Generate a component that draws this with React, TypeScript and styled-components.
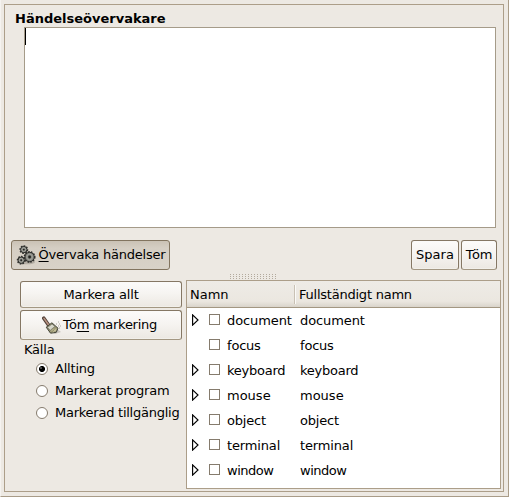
import React from "react";
import styled, { createGlobalStyle, css } from "styled-components";

const GlobalStyle = createGlobalStyle`
  * { box-sizing: border-box; }
  html, body { margin: 0; padding: 0; overflow: hidden; }
  body {
    background: #ede9e3;
    color: #000;
    font: 13px/16px "DejaVu Sans", sans-serif;
  }
`;

const Window = styled.div`
  width: 509px;
  height: 497px;
  padding: 4px 4px 4px 3px;
  background: #ede9e3;
  border-left: 1px solid #f5f3f0;
  border-right: 1px solid #a99c88;
  border-bottom: 1px solid #a99c88;
`;

const Page = styled.main`
  width: 500px;
  height: 488px;
  border: 1px solid #ac9e89;
  padding: 5px 2px 2px 6px;
  display: flex;
  flex-direction: column;
`;

const Title = styled.h1`
  margin: 0 0 0 4px;
  height: 17px;
  font-size: 13px;
  line-height: 18px;
  font-weight: bold;
  white-space: nowrap;
`;

const LogView = styled.div`
  width: 472px;
  height: 201px;
  margin-left: 13px;
  background: #fff;
  border: 1px solid #a59b89;
`;

const Caret = styled.div`
  width: 1px;
  height: 17px;
  background: #000;
`;

const Toolbar = styled.div`
  display: flex;
  gap: 2px;
  width: 486px;
  height: 30px;
  margin-top: 12px;
`;

const Spacer = styled.div`
  flex: 1;
`;

const Button = styled.button<{ $width: number; $height?: number; $pressed?: boolean }>`
  display: flex;
  align-items: center;
  justify-content: center;
  flex: none;
  width: ${(p) => p.$width}px;
  height: ${(p) => p.$height ?? 30}px;
  padding: 0;
  border: 1px solid #857764;
  border-bottom-color: #a39782;
  border-radius: 3px;
  color: #000;
  font: inherit;
  white-space: nowrap;
  background: linear-gradient(#fcfbfa, #f6f4f1 45%, #ece8e2);
  box-shadow: inset 0 0 0 1px #fbfaf866;
  ${(p) =>
    p.$pressed &&
    css`
      border-color: #82745f;
      background: linear-gradient(#cac2b5, #d5cec3 25%, #d8d2c8);
      box-shadow: none;
    `}
`;

const Label = styled.span<{ $track?: number; $before?: number; $after?: number }>`
  letter-spacing: ${(p) => p.$track ?? 0}px;
  margin-left: ${(p) => p.$before ?? 0}px;
  margin-right: ${(p) => p.$after ?? 0}px;
`;

const Mnemonic = styled.span`
  text-decoration: underline;
  text-decoration-thickness: 1px;
  text-underline-offset: 2px;
  text-decoration-skip-ink: none;
`;

const Grip = styled.div`
  width: 47px;
  height: 5px;
  margin: 4px 0 1px 219px;
  background-image: radial-gradient(circle at 0.5px 0.5px, #b3aa9d 0.6px, transparent 0.7px);
  background-size: 3px 2px;
`;

const Columns = styled.div`
  display: flex;
  gap: 4px;
  margin: 0 0 0 9px;
`;

const Sidebar = styled.section`
  width: 162px;
  display: flex;
  flex-direction: column;
  gap: 2px;
  padding-top: 1px;
`;

const SourceTitle = styled.div`
  margin: 0 0 0 4px;
  height: 14px;
`;

const Radios = styled.div`
  padding: 0 0 0 16px;
`;

const RadioRow = styled.label`
  display: flex;
  align-items: center;
  gap: 7px;
  height: 22px;
  white-space: nowrap;
`;

const RadioDot = styled.span<{ $on?: boolean }>`
  flex: none;
  width: 12px;
  height: 12px;
  border: 1px solid #857b6d;
  border-radius: 50%;
  background: ${(p) =>
    p.$on
      ? "radial-gradient(circle at 4px 4px, #777 0.4px, transparent 1.2px), radial-gradient(circle at center, #000 2.6px, #fff 3.5px)"
      : "#fff"};
`;

const Tree = styled.section`
  width: 315px;
  height: 209px;
  border: 1px solid #ac9e89;
  background: #fff;
`;

const TreeHeader = styled.div`
  display: flex;
  align-items: center;
  height: 27px;
  border-bottom: 1px solid #a39782;
  background: linear-gradient(#eeebe6, #ebe7e0 78%, #d9d4cb);
`;

const HeaderCell = styled.div<{ $first?: boolean }>`
  width: ${(p) => (p.$first ? "108px" : "auto")};
  height: 19px;
  padding: 2px 0 0 ${(p) => (p.$first ? 3 : 4)}px;
  letter-spacing: ${(p) => (p.$first ? 0 : -0.23)}px;
  border-right: ${(p) => (p.$first ? "1px solid #c9c1b4" : "none")};
  box-shadow: ${(p) => (p.$first ? "1px 0 #fbfaf8" : "none")};
`;

const TreeRow = styled.div`
  display: grid;
  grid-template-columns: 17px 18px 73px auto;
  align-items: center;
  height: 25px;
  padding-left: 5px;
`;

const Checkbox = styled.span`
  width: 11px;
  height: 11px;
  margin-bottom: 2px;
  border: 1px solid #857b6d;
  background: #fff;
`;

const ExpanderIcon = styled.svg`
  display: block;
  margin-bottom: 1px;
`;

const Expander = () => (
  <ExpanderIcon width="7" height="12" viewBox="0 0 7 12" fill="none">
    <path d="M.6 .9v10.2L6 6z" stroke="#000" strokeWidth="1.15" />
  </ExpanderIcon>
);

const Gear = ({ x, y, r }: { x: number; y: number; r: number }) => (
  <g transform={`translate(${x} ${y})`}>
    <circle r={r} fill="#85867f" stroke="#2c2d2a" strokeWidth="1" />
    <circle r={r + 0.5} fill="none" stroke="#30312e" strokeWidth="1.5" strokeDasharray="1.6 1.2" />
    <circle r={r * 0.6} fill="none" stroke="#a5a69f" strokeWidth=".9" />
    <circle r={r * 0.3} fill="#252623" />
  </g>
);

const GearsIcon = () => (
  <svg width="20" height="20" viewBox="0 0 20 20">
    <ellipse cx="11" cy="17" rx="8" ry="2.3" fill="#655e54" opacity=".3" />
    <Gear x={7.8} y={4.6} r={3.2} />
    <Gear x={13.6} y={12} r={4.7} />
    <Gear x={5.2} y={15.2} r={3.2} />
  </svg>
);

const BroomIcon = () => (
  <svg width="20" height="20" viewBox="0 0 20 20">
    <path d="M6 17l7 2 6-2-4-3z" fill="#8b877f" opacity=".4" />
    <path d="M1.8 3.2l4.9 7" stroke="#514139" strokeWidth="3.6" strokeLinecap="round" />
    <path d="M2 3.4l4.7 6.6" stroke="#b89281" strokeWidth="1.6" strokeLinecap="round" />
    <path d="M4.2 12.2L9.9 7.8l6.1 5.4-1.7 4.1-5.7.9z" fill="#96936f" stroke="#45463b" />
    <path d="M5.4 12.5l4.6-3.4 2.9 2.3-4.5 3.8z" fill="#d7d7ca" stroke="#6b6c60" strokeWidth=".6" />
    <path d="M9 16.5l3-3m-1 4 3-4m-1 3 1-2" stroke="#d0cca6" strokeWidth=".8" />
    <path d="M14 9h1m1-2h1m-1 4h1m0-2h1m-1 4h1m0-2h1" stroke="#aaa7a0" />
  </svg>
);

const events = [
  { name: "document", expandable: true, track: -0.1 },
  { name: "focus", expandable: false, track: -0.2 },
  { name: "keyboard", expandable: true, track: -0.25 },
  { name: "mouse", expandable: true, track: 0 },
  { name: "object", expandable: true, track: -0.2 },
  { name: "terminal", expandable: true, track: -0.15 },
  { name: "window", expandable: true, track: -0.5 },
];

const sources = [
  { name: "Allting", track: -0.2 },
  { name: "Markerat program", track: -0.2 },
  { name: "Markerad tillgänglig", track: -0.25 },
];

export default function App() {
  return (
    <>
      <GlobalStyle />
      <Window>
        <Page>
          <Title>Händelseövervakare</Title>
          <LogView>
            <Caret />
          </LogView>
          <Toolbar>
            <Button $width={159} $pressed>
              <GearsIcon />
              <Label $track={-0.22} $before={3}>
                <Mnemonic>Ö</Mnemonic>vervaka händelser
              </Label>
            </Button>
            <Spacer />
            <Button $width={48}>Spara</Button>
            <Button $width={36}>
              <Label $track={-0.2}>Töm</Label>
            </Button>
          </Toolbar>
          <Grip />
          <Columns>
            <Sidebar>
              <Button $width={162} $height={27}>
                <Label $track={-0.18}>Markera allt</Label>
              </Button>
              <Button $width={162}>
                <BroomIcon />
                <Label $track={-0.27} $before={1} $after={3}>
                  Tö<Mnemonic>m</Mnemonic> markering
                </Label>
              </Button>
              <SourceTitle>
                <Label $track={-0.2}>Källa</Label>
              </SourceTitle>
              <Radios>
                {sources.map((s, i) => (
                  <RadioRow key={s.name}>
                    <RadioDot $on={i === 0} />
                    <Label $track={s.track}>{s.name}</Label>
                  </RadioRow>
                ))}
              </Radios>
            </Sidebar>
            <Tree>
              <TreeHeader>
                <HeaderCell $first>Namn</HeaderCell>
                <HeaderCell>Fullständigt namn</HeaderCell>
              </TreeHeader>
              {events.map((e) => (
                <TreeRow key={e.name}>
                  {e.expandable ? <Expander /> : <span />}
                  <Checkbox />
                  <Label $track={e.track}>{e.name}</Label>
                  <Label $track={e.track}>{e.name}</Label>
                </TreeRow>
              ))}
            </Tree>
          </Columns>
        </Page>
      </Window>
    </>
  );
}
